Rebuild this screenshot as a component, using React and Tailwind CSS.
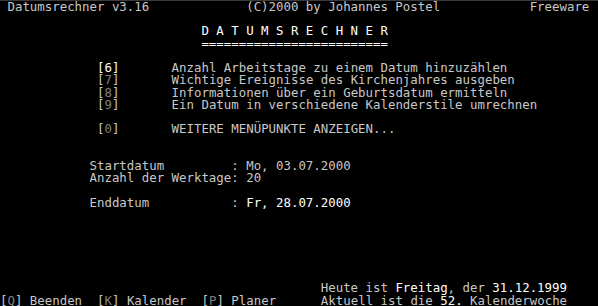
import React from "react"

// 80x25 text screen, one div per row
const W = "text-white"
const D = "text-[#808080]"

function Row({ children }) {
  return <div className="h-[12.24px] whitespace-pre">{children}</div>
}

function Key({ k, bright }) {
  return (
    <>
      [<span className={bright ? W : D}>{k}</span>]
    </>
  )
}

export default function App() {
  const menu = [
    ["6", "Anzahl Arbeitstage zu einem Datum hinzuzählen", true],
    ["7", "Wichtige Ereignisse des Kirchenjahres ausgeben"],
    ["8", "Informationen über ein Geburtsdatum ermitteln"],
    ["9", "Ein Datum in verschiedene Kalenderstile umrechnen"],
  ]

  return (
    <div className="w-[598px] h-[306px] overflow-hidden bg-black border-t border-[#3a3a3a] font-['DejaVu_Sans_Mono',monospace] text-[12.4px] leading-[12.24px] text-[#c8c8c8]">
      <Row>
        {" Datumsrechner v3.16             (C)2000 by Johannes Postel            Freeware"}
      </Row>
      <Row />
      <Row>
        <span className={W}>{"                           D A T U M S R E C H N E R"}</span>
      </Row>
      <Row>
        <span className={W}>{"                           ========================="}</span>
      </Row>
      <Row />
      {menu.map(([k, label, bright]) => (
        <Row key={k}>
          {"             "}
          <span className={bright ? W : ""}>
            [<span className={bright ? W : D}>{k}</span>]
          </span>
          {"       " + label}
        </Row>
      ))}
      <Row />
      <Row>
        {"             "}
        <Key k="0" />
        {"       WEITERE MENÜPUNKTE ANZEIGEN..."}
      </Row>
      <Row />
      <Row />
      <Row>{"            Startdatum         : Mo, 03.07.2000"}</Row>
      <Row>{"            Anzahl der Werktage: 20"}</Row>
      <Row />
      <Row>
        {"            Enddatum           : "}
        <span className={W}>Fr, 28.07.2000</span>
      </Row>
      <Row />
      <Row />
      <Row />
      <Row />
      <Row />
      <Row />
      <Row>
        {"                                           Heute ist "}
        <span className={W}>Freitag</span>
        {", der "}
        <span className={W}>31.12.1999</span>
      </Row>
      <Row>
        <Key k="Q" />
        {" Beenden  "}
        <Key k="K" />
        {" Kalender  "}
        <Key k="P" />
        {" Planer      Aktuell ist die "}
        <span className={W}>52.</span>
        {" Kalenderwoche"}
      </Row>
    </div>
  )
}
